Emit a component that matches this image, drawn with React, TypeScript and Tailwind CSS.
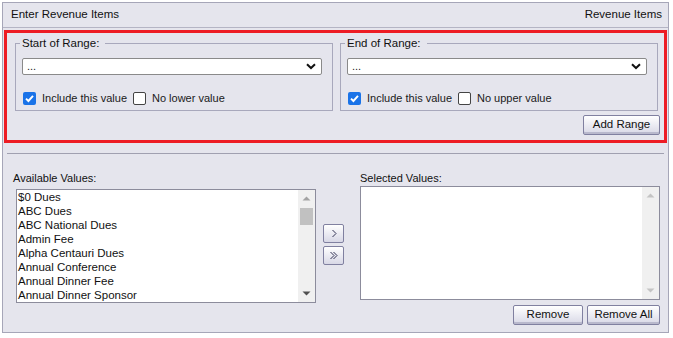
import React from 'react';

const font = { fontFamily: '"Liberation Sans", Arial, sans-serif' };

function Checkbox({ checked }: { checked: boolean }) {
  if (checked) {
    return (
      <span className="flex h-[13px] w-[13px] items-center justify-center rounded-[2px] bg-[#1a73e8]">
        <svg width="11" height="11" viewBox="0 0 11 11">
          <path d="M2 5.6 L4.4 8 L9 2.8" fill="none" stroke="#fff" strokeWidth="1.9" />
        </svg>
      </span>
    );
  }
  return <span className="block h-[13px] w-[13px] rounded-[2px] border border-[#444] bg-white" />;
}

function Select() {
  return (
    <div className="flex h-[17px] w-[300px] items-center justify-between rounded-[2px] border border-[#8a8a8a] bg-white pl-[4px] pr-[5px]">
      <span className="text-[11px] leading-none text-[#222]">...</span>
      <svg width="10" height="7" viewBox="0 0 10 7">
        <path d="M1 1.2 L5 5 L9 1.2" fill="none" stroke="#111" strokeWidth="2" />
      </svg>
    </div>
  );
}

function Button({ label, w }: { label: string; w: string }) {
  return (
    <button
      className={`${w} h-[20px] rounded-[2px] border border-[#8080a0] bg-gradient-to-b from-[#ffffff] to-[#d8d8e6] text-[11.5px] leading-none text-[#111] shadow-[inset_0_-2px_0_#b8b8cc]`}
    >
      {label}
    </button>
  );
}

function RangeBox({ legend, other }: { legend: string; other: string }) {
  return (
    <fieldset className="h-[75px] w-[318px] border border-[#a8a8bc] pl-[6px]">
      <legend className="ml-[-2px] pl-[2px] pr-[6px] text-[11.5px] leading-[14px] text-[#111]">{legend}</legend>
      <div className="mt-[8px]">
        <Select />
      </div>
      <div className="mt-[17px] flex items-center text-[11px] leading-none text-[#1a1a1a]">
        <span className="ml-[1px]">
          <Checkbox checked />
        </span>
        <span className="ml-[6px]">Include this value</span>
        <span className="ml-[6px]">
          <Checkbox checked={false} />
        </span>
        <span className="ml-[6px]">{other}</span>
      </div>
    </fieldset>
  );
}

function ScrollTrack({ thumb }: { thumb: boolean }) {
  return (
    <div className="flex w-[17px] flex-col items-center bg-[#f0f0f0]">
      <svg className="mt-[6px]" width="9" height="5" viewBox="0 0 9 5">
        <path d="M0.5 4.5 L4.5 0.5 L8.5 4.5 Z" fill={thumb ? '#a3a3a3' : '#c4c4c4'} />
      </svg>
      {thumb ? <div className="mt-[7px] h-[17px] w-[13px] bg-[#c1c1c1]" /> : null}
      <div className="flex-1" />
      <svg className="mb-[6px]" width="9" height="5" viewBox="0 0 9 5">
        <path d="M0.5 0.5 L8.5 0.5 L4.5 4.5 Z" fill={thumb ? '#505050' : '#c4c4c4'} />
      </svg>
    </div>
  );
}

const items = [
  '$0 Dues',
  'ABC Dues',
  'ABC National Dues',
  'Admin Fee',
  'Alpha Centauri Dues',
  'Annual Conference',
  'Annual Dinner Fee',
  'Annual Dinner Sponsor',
];

export default function App() {
  return (
    <div className="h-[338px] w-[673px] bg-white pl-[2px] pt-[2px]" style={font}>
      <div className="flex h-[331px] w-[667px] flex-col border border-[#a6a6b8] bg-[#e5e5ed] text-[#111]">
        <div className="flex h-[25px] shrink-0 items-center justify-between border-b border-[#b4b4c4] pl-[8px] pr-[6px] text-[11.5px]">
          <span>Enter Revenue Items</span>
          <span>Revenue Items</span>
        </div>
        <div className="mx-[1px] mt-[2px] flex h-[113px] flex-col border-[3px] border-[#ed1c24] pl-[8px] pr-[4px] pt-[3px]">
          <div className="flex gap-[7px]">
            <RangeBox legend="Start of Range:" other="No lower value" />
            <RangeBox legend="End of Range:" other="No upper value" />
          </div>
          <div className="mt-[4px] flex justify-end">
            <Button label="Add Range" w="w-[77px]" />
          </div>
        </div>
        <div className="mx-[4px] mt-[10px] h-[2px] border-t border-[#a0a0b0] border-b-white" />
        <div className="flex pl-[10px] pt-[16px]">
          <div className="flex flex-col">
            <div className="h-[14px] text-[11px] leading-[14px]">Available Values:</div>
            <div className="ml-[3px] mt-[4px] flex h-[114px] w-[300px] border border-[#8c8c9c] bg-white">
              <div className="flex-1 pl-[1px] text-[11.5px] leading-[14px] text-[#111]">
                {items.map((it) => (
                  <div key={it} className="h-[14px] whitespace-nowrap">
                    {it}
                  </div>
                ))}
              </div>
              <ScrollTrack thumb />
            </div>
          </div>
          <div className="ml-[7px] mt-[53px] flex flex-col gap-[3px]">
            <button className="flex h-[19px] w-[21px] items-center justify-center rounded-[2px] border border-[#8080a0] bg-gradient-to-b from-[#ffffff] to-[#d8d8e6]">
              <svg width="8" height="9" viewBox="0 0 8 9">
                <path d="M2.5 1 L6 4.5 L2.5 8" fill="none" stroke="#333355" strokeWidth="1" />
              </svg>
            </button>
            <button className="flex h-[19px] w-[21px] items-center justify-center rounded-[2px] border border-[#8080a0] bg-gradient-to-b from-[#ffffff] to-[#d8d8e6]">
              <svg width="10" height="9" viewBox="0 0 10 9">
                <path d="M1.5 1 L5 4.5 L1.5 8 M4.5 1 L8 4.5 L4.5 8" fill="none" stroke="#333355" strokeWidth="1" />
              </svg>
            </button>
          </div>
          <div className="ml-[16px] flex flex-col">
            <div className="h-[14px] text-[11px] leading-[14px]">Selected Values:</div>
            <div className="mt-[1px] flex h-[114px] w-[300px] border border-[#8c8c9c] bg-white">
              <div className="flex-1" />
              <ScrollTrack thumb={false} />
            </div>
            <div className="mt-[5px] flex justify-end gap-[4px]">
              <Button label="Remove" w="w-[70px]" />
              <Button label="Remove All" w="w-[73px]" />
            </div>
          </div>
        </div>
      </div>
    </div>
  );
}
